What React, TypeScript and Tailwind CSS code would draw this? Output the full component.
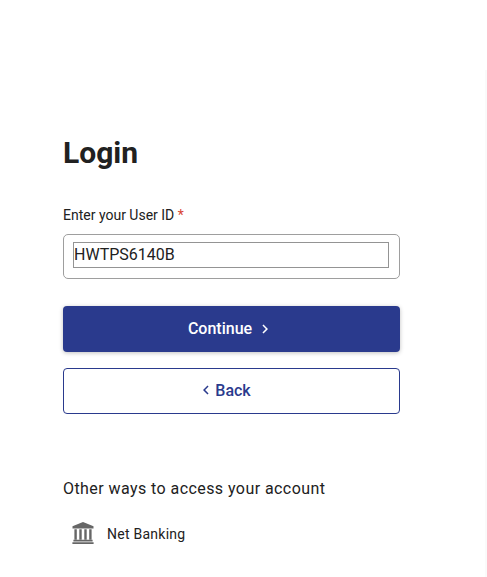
import { MdChevronLeft, MdChevronRight } from 'react-icons/md';

// Bank building: roof, four columns and a two-step base
const BankIcon = ({ className }: { className?: string }) => (
  <svg viewBox="0 0 24 24" fill="currentColor" className={className} aria-hidden="true">
    <path d="M12 0 22.5 4.2v2.3h-21V4.2z" />
    <path d="M3.4 7.2h2.4v10.6H3.4zM8.3 7.2h2.4v10.6H8.3zM13.3 7.2h2.4v10.6h-2.4zM18.2 7.2h2.4v10.6h-2.4z" />
    <path d="M2.4 17.8h19.2v1.6H2.4zM1.4 20.2h21.2v1.8H1.4z" />
  </svg>
);

export default function App() {
  return (
    <div className="h-[577px] w-[487px] overflow-hidden bg-white pt-[70px] font-['Roboto',sans-serif] text-[#212121]">
      <main className="h-full border-r-2 border-[#fafafa] pl-[63px] pt-[62px]">
        <h1 className="text-[30px] leading-[42px] font-bold">Login</h1>

        <form className="mt-[31px] w-[337px]" onSubmit={(e) => e.preventDefault()}>
          <label htmlFor="userId" className="block text-sm leading-5">
            Enter your User ID <span className="text-[#d84332]">*</span>
          </label>
          <div className="mt-[9px] h-[45px] rounded-[5px] border border-[#9e9e9e] py-[7px] pr-[10px] pl-[9px]">
            <input
              id="userId"
              defaultValue="HWTPS6140B"
              className="block h-[26px] w-full border border-[#949494] pb-0.5 text-base outline-none"
            />
          </div>

          <button
            type="submit"
            className="mt-[27px] flex h-[46px] w-full items-center justify-center rounded bg-[#2a3a8d] pr-px text-base font-medium text-white shadow-[0_1px_4px_rgba(0,0,0,0.25)]"
          >
            Continue <MdChevronRight className="mb-px ml-1 size-[18px]" />
          </button>
          <button
            type="button"
            className="mt-4 flex h-[46px] w-full items-center justify-center rounded border border-[#2a3a8d] pr-[15px] text-base font-medium text-[#2a3a8d]"
          >
            <MdChevronLeft className="mb-0.5 size-[18px]" /> Back
          </button>
        </form>

        <h2 className="mt-[63px] text-base leading-6 tracking-[0.43px]">Other ways to access your account</h2>
        <a className="mt-[21px] flex h-6 items-center pl-2 text-sm tracking-[0.25px]">
          <BankIcon className="mr-3 size-6 text-[#666]" />
          Net Banking
        </a>
      </main>
    </div>
  );
}
